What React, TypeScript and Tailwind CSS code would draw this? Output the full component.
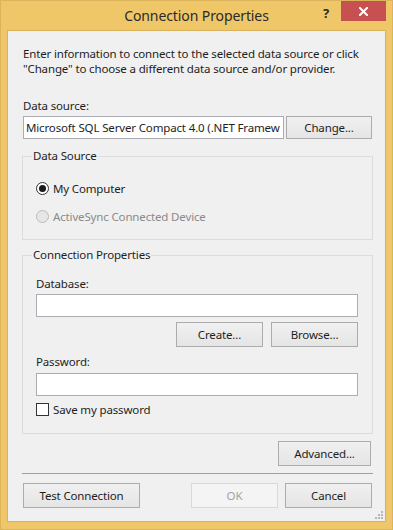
import React from "react";

const font = { fontFamily: '"Noto Sans", "Open Sans", sans-serif' };

function Btn({ children, w, disabled }: { children: React.ReactNode; w: string; disabled?: boolean }) {
  return (
    <div
      className={
        "flex items-center justify-center h-[25px] border " +
        w +
        (disabled
          ? " border-[#d9d9d9] bg-[#f4f4f4] text-[#a3a3a3]"
          : " border-[#acacac] bg-gradient-to-b from-[#f0f0f0] to-[#e5e5e5] text-[#1e1e1e]")
      }
    >
      {children}
    </div>
  );
}

function Radio({ checked, disabled, label }: { checked?: boolean; disabled?: boolean; label: string }) {
  return (
    <div className="flex items-center h-[16px]">
      <div
        className={
          "w-[13px] h-[13px] rounded-full border flex items-center justify-center " +
          (disabled ? "border-[#bcbcbc] bg-[#e6e6e6]" : "border-[#333333] bg-white")
        }
      >
        {checked && <div className="w-[7px] h-[7px] rounded-full bg-[#1a1a1a]" />}
      </div>
      <span className={"ml-[4px] leading-[15px] " + (disabled ? "text-[#8a8a8a]" : "text-[#1e1e1e]")}>{label}</span>
    </div>
  );
}

export default function App() {
  return (
    <div
      style={font}
      className="w-[393px] h-[530px] bg-[#efc769] border border-[#dcb45b] flex flex-col overflow-hidden text-[11.5px] tracking-[-0.15px]"
    >
      {/* Title bar */}
      <div className="relative h-[29px] flex items-center justify-center">
        <span className="text-[14px] text-[#2a2a2a] tracking-[-0.1px]">Connection Properties</span>
        <span className="absolute left-[322px] top-[3px] text-[13px] font-bold text-[#2a2a2a]">?</span>
        <div className="absolute left-[340px] top-0 w-[45px] h-[20px] bg-[#c75050] flex items-center justify-center">
          <svg width="9" height="9" viewBox="0 0 9 9">
            <path d="M1 1 L8 8 M8 1 L1 8" stroke="white" strokeWidth="2" strokeLinecap="square" />
          </svg>
        </div>
      </div>
      {/* Client */}
      <div className="mx-[6px] border border-[#d9b25c] bg-[#f0f0f0] h-[492px] flex flex-col pl-[14px] text-[#1e1e1e] relative">
        <div className="mt-[15px] pl-[1px] leading-[15px] whitespace-nowrap">
          Enter information to connect to the selected data source or click
          <br />
          "Change" to choose a different data source and/or provider.
        </div>
        <div className="mt-[22px] pl-[1px] leading-[15px]">Data source:</div>
        <div className="mt-[3px] flex items-center">
          <div className="ml-[1px] w-[261px] h-[23px] border border-[#abadb3] bg-white overflow-hidden whitespace-nowrap pl-[2px] leading-[21px]">
            Microsoft SQL Server Compact 4.0 (.NET Framew
          </div>
          <div className="ml-[2px]">
            <div className="flex items-center justify-center h-[23px] w-[86px] border border-[#acacac] bg-gradient-to-b from-[#f0f0f0] to-[#e5e5e5]">
              Change...
            </div>
          </div>
        </div>

        {/* Data Source group */}
        <div className="mt-[17px] w-[351px] h-[84px] border border-[#dcdcdc] relative flex flex-col pl-[13px]">
          <span className="absolute left-[9px] top-[-9px] px-[1px] bg-[#f0f0f0] leading-[15px]">Data Source</span>
          <div className="mt-[23px]">
            <Radio checked label="My Computer" />
          </div>
          <div className="mt-[12px]">
            <Radio disabled label="ActiveSync Connected Device" />
          </div>
        </div>

        {/* Connection Properties group */}
        <div className="mt-[15px] w-[351px] h-[179px] border border-[#dcdcdc] relative flex flex-col pl-[13px] pr-[14px]">
          <span className="absolute left-[9px] top-[-9px] px-[1px] bg-[#f0f0f0] leading-[15px]">Connection Properties</span>
          <div className="mt-[20px] leading-[15px]">Database:</div>
          <div className="mt-[3px] h-[23px] border border-[#abadb3] bg-white" />
          <div className="mt-[5px] flex justify-end gap-[8px]">
            <Btn w="w-[87px]">Create...</Btn>
            <Btn w="w-[87px]">Browse...</Btn>
          </div>
          <div className="mt-[7px] leading-[15px]">Password:</div>
          <div className="mt-[4px] h-[23px] border border-[#abadb3] bg-white" />
          <div className="mt-[6px] flex items-center h-[15px]">
            <div className="w-[13px] h-[13px] border border-[#333333] bg-white" />
            <span className="ml-[4px] leading-[15px]">Save my password</span>
          </div>
        </div>

        <div className="mt-[7px] flex justify-end pr-[14px]">
          <Btn w="w-[93px]">Advanced...</Btn>
        </div>
        <div className="mt-[7px] w-[351px] h-[1px] bg-[#a0a0a0]" />
        <div className="mt-[9px] flex pl-[1px]">
          <Btn w="w-[117px]">Test Connection</Btn>
          <div className="ml-[51px]">
            <Btn w="w-[87px]" disabled>
              OK
            </Btn>
          </div>
          <div className="ml-[7px]">
            <Btn w="w-[87px]">Cancel</Btn>
          </div>
        </div>

        {/* resize grip */}
        <svg className="absolute right-[1px] bottom-[1px]" width="11" height="11" viewBox="0 0 11 11">
          <g fill="#b5b5b5">
            <rect x="8" y="2" width="2" height="2" />
            <rect x="5" y="5" width="2" height="2" />
            <rect x="8" y="5" width="2" height="2" />
            <rect x="2" y="8" width="2" height="2" />
            <rect x="5" y="8" width="2" height="2" />
            <rect x="8" y="8" width="2" height="2" />
          </g>
        </svg>
      </div>
    </div>
  );
}
